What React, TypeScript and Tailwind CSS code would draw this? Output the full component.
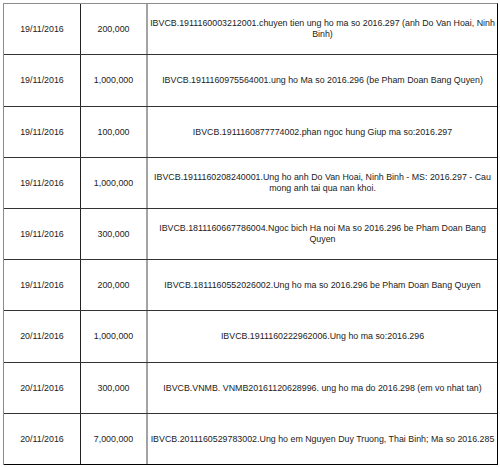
const rows = [
  { date: "19/11/2016", amount: "200,000", note: "IBVCB.1911160003212001.chuyen tien ung ho ma so 2016.297 (anh Do Van Hoai, Ninh Binh)", h: "h-[51px]" },
  { date: "19/11/2016", amount: "1,000,000", note: "IBVCB.1911160975564001.ung ho Ma so 2016.296 (be Pham Doan Bang Quyen)", h: "h-[52px]" },
  { date: "19/11/2016", amount: "100,000", note: "IBVCB.1911160877774002.phan ngoc hung Giup ma so:2016.297", h: "h-[51px]" },
  { date: "19/11/2016", amount: "1,000,000", note: "IBVCB.1911160208240001.Ung ho anh Do Van Hoai, Ninh Binh - MS: 2016.297 - Cau mong anh tai qua nan khoi.", h: "h-[51px]" },
  { date: "19/11/2016", amount: "300,000", note: "IBVCB.1811160667786004.Ngoc bich Ha noi Ma so 2016.296 be Pham Doan Bang Quyen", h: "h-[51px]" },
  { date: "19/11/2016", amount: "200,000", note: "IBVCB.1811160552026002.Ung ho ma so 2016.296 be Pham Doan Bang Quyen", h: "h-[51px]" },
  { date: "20/11/2016", amount: "1,000,000", note: "IBVCB.1911160222962006.Ung ho ma so:2016.296", h: "h-[52px]" },
  { date: "20/11/2016", amount: "300,000", note: "IBVCB.VNMB. VNMB20161120628996. ung ho ma do 2016.298 (em vo nhat tan)", h: "h-[51px]" },
  { date: "20/11/2016", amount: "7,000,000", note: "IBVCB.2011160529783002.Ung ho em Nguyen Duy Truong, Thai Binh; Ma so 2016.285", h: "h-[51px]" },
];

function App() {
  return (
    <main
      className="w-[500px] h-[467px] bg-white pt-[3px] pl-[3px] text-[#222] text-[8.85px] leading-[11px]"
      style={{ fontFamily: '"Liberation Sans", Arial, sans-serif' }}
    >
      <div className="w-[495px] border-l border-t border-[#8c8c8c] border-r border-r-black">
        {rows.map((row, i) => (
          <div
            key={i}
            className={`flex ${row.h} border-b ${i === rows.length - 1 ? "border-black" : "border-[#333]"}`}
          >
            <div className="w-[77px] shrink-0 flex items-center justify-center border-r border-[#222]">
              {row.date}
            </div>
            <div className="w-[67px] shrink-0 flex items-center justify-center border-r-2 border-[#a3a3a3]">
              {row.amount}
            </div>
            <div className="flex-1 flex items-center justify-center text-center">
              {row.note}
            </div>
          </div>
        ))}
      </div>
    </main>
  );
}

export default App;
